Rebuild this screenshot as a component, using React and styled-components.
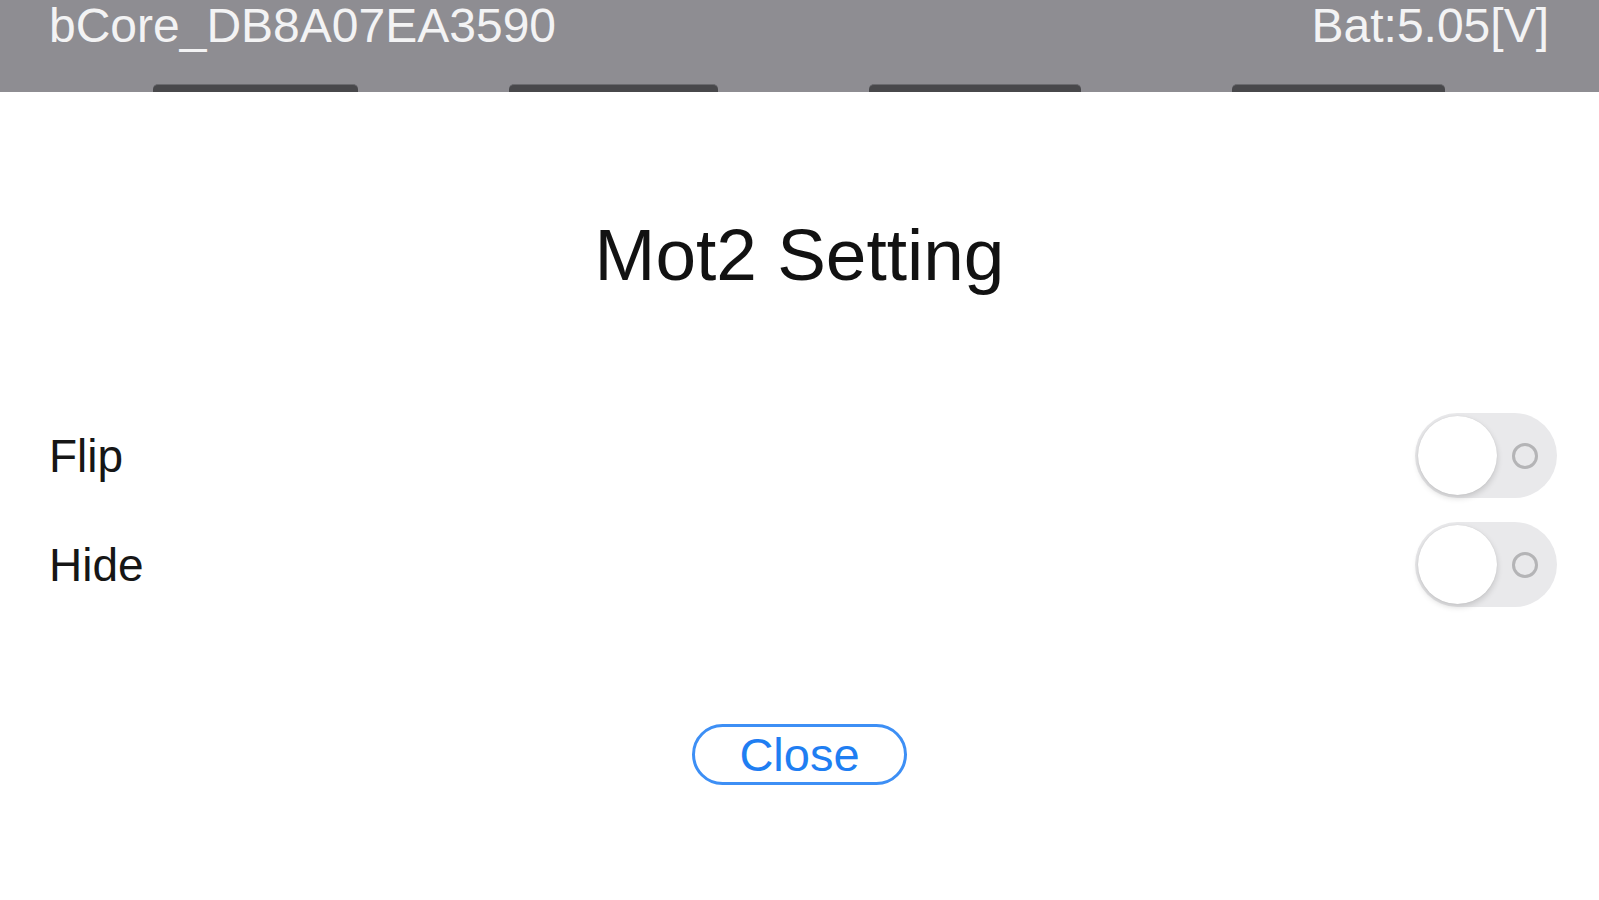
import React from "react";
import styled, { createGlobalStyle } from "styled-components";

const GlobalStyle = createGlobalStyle`
  html, body {
    margin: 0;
    padding: 0;
    background: #ffffff;
    font-family: "Liberation Sans", Arial, sans-serif;
  }
`;

const Page = styled.div`
  width: 1599px;
  height: 900px;
  overflow: hidden;
  background: #ffffff;
  display: flex;
  flex-direction: column;
`;

const Header = styled.div`
  height: 92px;
  background: #8e8d92;
  display: flex;
  flex-direction: column;
  box-sizing: border-box;
  padding: 0 50px 0 49px;
`;

const HeaderRow = styled.div`
  display: flex;
  justify-content: space-between;
  color: #f3f3f4;
  font-size: 48px;
  line-height: 51px;
`;

const TabRow = styled.div`
  margin-top: auto;
  display: flex;
  justify-content: center;
  gap: 151px;
`;

const Tab = styled.div`
  width: ${(p) => p.w}px;
  height: 8px;
  background: #48484b;
  border-top: 1px solid #6a6a6e;
  border-radius: 5px 5px 0 0;
  box-sizing: border-box;
`;

const Sheet = styled.div`
  display: flex;
  flex-direction: column;
  padding: 127px 42px 0 49px;
`;

const Title = styled.h1`
  margin: 0;
  padding-right: 7px;
  text-align: center;
  font-weight: normal;
  font-size: 73px;
  line-height: 72px;
  color: #121212;
`;

const Rows = styled.div`
  display: flex;
  flex-direction: column;
  gap: 24px;
  margin-top: 122px;
`;

const Row = styled.div`
  display: flex;
  align-items: center;
  justify-content: space-between;
  height: 85px;
`;

const Label = styled.span`
  font-size: 46px;
  color: #161616;
`;

const Switch = styled.div`
  width: 142px;
  height: 85px;
  border-radius: 43px;
  background: #e9e9eb;
  display: flex;
  align-items: center;
  justify-content: space-between;
  box-sizing: border-box;
  padding: 0 19px 0 3px;
`;

const Knob = styled.div`
  width: 79px;
  height: 79px;
  border-radius: 50%;
  background: #ffffff;
  box-shadow: 0 3px 6px rgba(0, 0, 0, 0.16), 0 0 1px rgba(0, 0, 0, 0.12);
`;

const OffRing = styled.div`
  width: 26px;
  height: 26px;
  border-radius: 50%;
  border: 3.5px solid #b4b4b6;
  box-sizing: border-box;
`;

const Footer = styled.div`
  display: flex;
  justify-content: center;
  margin-top: 117px;
  padding-right: 7px;
`;

const CloseButton = styled.button`
  width: 215px;
  height: 61px;
  border: 3px solid #3d8ff5;
  border-radius: 31px;
  background: #ffffff;
  color: #1f7ef2;
  font-family: "Liberation Sans", Arial, sans-serif;
  font-size: 47px;
  line-height: 1;
  padding: 0;
  cursor: pointer;
`;

const settings = ["Flip", "Hide"];

export default function App() {
  return (
    <Page>
      <GlobalStyle />
      <Header>
        <HeaderRow>
          <span>bCore_DB8A07EA3590</span>
          <span>Bat:5.05[V]</span>
        </HeaderRow>
        <TabRow>
          <Tab w={205} />
          <Tab w={209} />
          <Tab w={212} />
          <Tab w={213} />
        </TabRow>
      </Header>
      <Sheet>
        <Title>Mot2 Setting</Title>
        <Rows>
          {settings.map((name) => (
            <Row key={name}>
              <Label>{name}</Label>
              <Switch>
                <Knob />
                <OffRing />
              </Switch>
            </Row>
          ))}
        </Rows>
        <Footer>
          <CloseButton>Close</CloseButton>
        </Footer>
      </Sheet>
    </Page>
  );
}
